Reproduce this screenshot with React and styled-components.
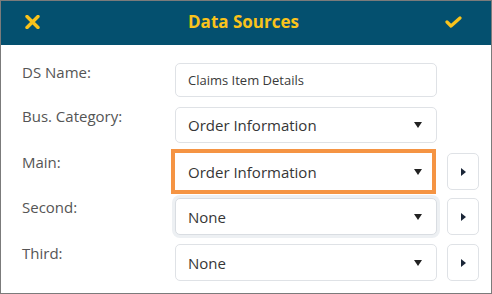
import React from "react";
import styled, { createGlobalStyle } from "styled-components";

const GlobalStyle = createGlobalStyle`
  html, body {
    margin: 0;
    padding: 0;
    background: #fff;
  }
  body {
    font-family: "Open Sans", "Noto Sans", sans-serif;
  }
`;

const Frame = styled.div`
  width: 492px;
  height: 294px;
  box-sizing: border-box;
  border: 1px solid #7b7b7b;
  background: #fff;
  display: flex;
  flex-direction: column;
`;

const Header = styled.header`
  height: 44px;
  flex-shrink: 0;
  box-sizing: border-box;
  background: #04506f;
  display: grid;
  grid-template-columns: 1fr auto 1fr;
  align-items: center;
  padding: 0 29px 3px 24px;
`;

const Title = styled.h1`
  margin: 0;
  font-size: 17px;
  font-weight: 700;
  color: #f9c31b;
`;

const IconButton = styled.span`
  display: flex;
  justify-self: ${(p) => (p.$end ? "end" : "start")};
  cursor: pointer;
`;

const Body = styled.div`
  padding: 18px 11px 0 21px;
`;

const Row = styled.div`
  display: grid;
  grid-template-columns: 153px 262px 42px;
  height: ${(p) => p.$h}px;
  margin-top: ${(p) => p.$mt || 0}px;
`;

const Label = styled.label`
  font-size: 15px;
  line-height: 18px;
  color: #555;
`;

const TextInput = styled.div`
  box-sizing: border-box;
  border: 1px solid #dfe2e6;
  border-radius: 5px;
  padding: 0 12px;
  display: flex;
  align-items: center;
  font-size: 13px;
  color: #3a3a3a;
`;

const SelectBox = styled.div`
  box-sizing: border-box;
  display: flex;
  align-items: center;
  justify-content: space-between;
  padding: 0 14px 0 12px;
  font-size: 15px;
  color: #363636;
  background: #fff;
  border: 1px solid #dfe2e6;
  border-radius: 5px;

  ${(p) =>
    p.$highlight &&
    `
    border: 4px solid #f59443;
    border-radius: 0;
    margin: -4px 1px -4px -4px;
    padding: 0 10px 0 13px;
  `}

  ${(p) =>
    p.$focused &&
    `
    border-color: #d9dde2;
    box-shadow: 0 0 0 3px #edf0f3;
  `}
`;

const ArrowButton = styled.button`
  justify-self: end;
  width: 32px;
  box-sizing: border-box;
  border: 1px solid #dfe2e6;
  border-radius: 5px;
  background: #fff;
  padding: 0;
  display: flex;
  align-items: center;
  justify-content: center;
  cursor: pointer;
`;

const Caret = () => (
  <svg width="8" height="6" viewBox="0 0 8 6">
    <path d="M0 0 H8 L4 6 Z" fill="#222" />
  </svg>
);

const RightCaret = () => (
  <svg width="5" height="8" viewBox="0 0 5 8">
    <path d="M0 0 L5 4 L0 8 Z" fill="#1b2638" />
  </svg>
);

function Select({ value, highlight, focused }) {
  return (
    <SelectBox $highlight={highlight} $focused={focused}>
      <span>{value}</span>
      <Caret />
    </SelectBox>
  );
}

const rows = [
  { label: "Main:", value: "Order Information", mt: 10, highlight: true },
  { label: "Second:", value: "None", mt: 8, focused: true },
  { label: "Third:", value: "None", mt: 9 },
];

export default function App() {
  return (
    <>
      <GlobalStyle />
      <Frame>
        <Header>
          <IconButton>
            <svg width="15" height="14" viewBox="0 0 15 14">
              <path
                d="M2 1.5 L13 12.5 M13 1.5 L2 12.5"
                stroke="#f9c31b"
                strokeWidth="3.4"
                strokeLinecap="round"
              />
            </svg>
          </IconButton>
          <Title>Data Sources</Title>
          <IconButton $end>
            <svg width="17" height="12" viewBox="0 0 17 12">
              <path
                d="M2 6 L6 10 L15 2"
                stroke="#f9c31b"
                strokeWidth="3.2"
                strokeLinecap="round"
                strokeLinejoin="round"
                fill="none"
              />
            </svg>
          </IconButton>
        </Header>
        <Body>
          <Row $h={34}>
            <Label>DS Name:</Label>
            <TextInput>Claims Item Details</TextInput>
          </Row>
          <Row $h={36} $mt={10}>
            <Label>Bus. Category:</Label>
            <Select value="Order Information" />
          </Row>
          {rows.map((r) => (
            <Row key={r.label} $h={37} $mt={r.mt}>
              <Label>{r.label}</Label>
              <Select value={r.value} highlight={r.highlight} focused={r.focused} />
              <ArrowButton>
                <RightCaret />
              </ArrowButton>
            </Row>
          ))}
        </Body>
      </Frame>
    </>
  );
}
